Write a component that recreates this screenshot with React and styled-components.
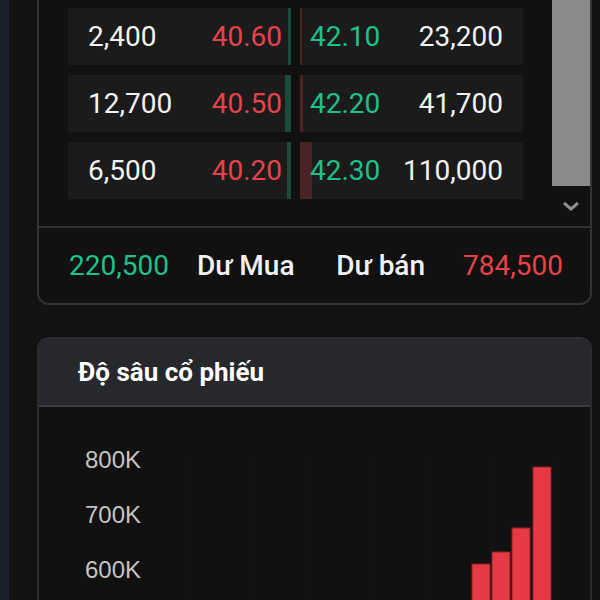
import styled, { createGlobalStyle } from "styled-components";

const GlobalStyle = createGlobalStyle`
  html, body {
    margin: 0;
    padding: 0;
    background: #121212;
    font-family: Roboto, "Noto Sans", "Liberation Sans", sans-serif;
    overflow: hidden;
  }
`;

const buyColor = "#20c08a";
const sellColor = "#e8434a";

const Shell = styled.div`
  display: flex;
  width: 600px;
  height: 600px;
  overflow: hidden;
`;

const SideRail = styled.div`
  width: 9px;
  flex-shrink: 0;
  background: #1b1e2b;
`;

const Main = styled.div`
  flex: 1;
  padding: 0 8px 0 28px;
  display: flex;
  flex-direction: column;
  gap: 32px;
`;

const OrderPanel = styled.div`
  border: 2px solid #333335;
  border-top: none;
  border-radius: 0 0 12px 12px;
  background: #111111;
`;

const Book = styled.div`
  display: flex;
  height: 226px;
`;

const RowList = styled.div`
  flex: 1;
  padding: 8px 29px 0;
  display: flex;
  flex-direction: column;
  gap: 10px;
`;

const Row = styled.div`
  display: grid;
  grid-template-columns: 1fr 1fr;
  gap: 9px;
  height: 57px;
`;

const Cell = styled.div`
  position: relative;
  background: #1b1b1b;
  display: flex;
  align-items: center;
  justify-content: space-between;
  padding: ${(p) => (p.side === "buy" ? "0 9px 0 20px" : "0 20px 0 10px")};
  font-size: 28px;
  color: #f2f2f2;
`;

const DepthBar = styled.span`
  position: absolute;
  top: 0;
  bottom: 0;
  ${(p) => (p.side === "buy" ? "right: 0;" : "left: 0;")}
  background: ${(p) => (p.side === "buy" ? "#1d4b39" : "#4b2327")};
`;

const Value = styled.span`
  position: relative;
  color: ${(p) => p.color || "#f2f2f2"};
`;

const Scrollbar = styled.div`
  width: 38px;
  display: flex;
  flex-direction: column;
`;

const Thumb = styled.div`
  height: 186px;
  background: #8b8b8b;
`;

const ArrowBtn = styled.div`
  flex: 1;
  display: flex;
  align-items: center;
  justify-content: center;
  color: #8e8e8e;
`;

const Totals = styled.div`
  border-top: 2px solid #333335;
  height: 75px;
  display: flex;
  align-items: center;
  justify-content: space-between;
  padding: 0 27px 0 30px;
  font-size: 28px;
`;

const TotalGroup = styled.div`
  display: flex;
  align-items: center;
  gap: ${(p) => p.gap}px;
`;

const TotalText = styled.span`
  color: ${(p) => p.color || "#f2f2f2"};
  font-weight: ${(p) => (p.label ? 500 : 400)};
`;

const DepthPanel = styled.div`
  flex: 1;
  border: 2px solid #2a2c31;
  border-bottom: none;
  border-radius: 12px 12px 0 0;
  overflow: hidden;
  display: flex;
  flex-direction: column;
  background: #111111;
`;

const PanelHeader = styled.div`
  height: 66px;
  flex-shrink: 0;
  background: #26282c;
  border-bottom: 2px solid #3a3c42;
  display: flex;
  align-items: center;
  padding-left: 39px;
  font-size: 26px;
  font-weight: 700;
  color: #ffffff;
`;

const ChartBody = styled.div`
  flex: 1;
`;

const rows = [
  { bq: "2,400", bp: "40.60", bw: 3, sp: "42.10", sq: "23,200", sw: 2 },
  { bq: "12,700", bp: "40.50", bw: 6, sp: "42.20", sq: "41,700", sw: 3 },
  { bq: "6,500", bp: "40.20", bw: 4, sp: "42.30", sq: "110,000", sw: 12 },
];

const bars = [
  { x: 433, top: 157 },
  { x: 453, top: 145 },
  { x: 473, top: 121 },
  { x: 494, top: 60 },
];

const gridX = [148, 210, 268, 330, 392, 454, 516];

const DepthChart = () => (
  <svg width="551" height="200" viewBox="0 0 551 200">
    {gridX.map((x) => (
      <line key={x} x1={x} y1="56" x2={x} y2="200" stroke="#151515" strokeWidth="1.5" />
    ))}
    {["800K", "700K", "600K"].map((t, i) => (
      <text
        key={t}
        x="46"
        y={61 + i * 55}
        fill="#c4c4c4"
        fontSize="24"
        fontFamily="Liberation Sans, Arial, sans-serif"
      >
        {t}
      </text>
    ))}
    {bars.map((b) => (
      <rect
        key={b.x}
        x={b.x}
        y={b.top}
        width="18"
        height={200 - b.top}
        fill="#e53a44"
        stroke="#8a2229"
        strokeWidth="1"
      />
    ))}
  </svg>
);

export default function App() {
  return (
    <Shell>
      <GlobalStyle />
      <SideRail />
      <Main>
        <OrderPanel>
          <Book>
            <RowList>
              {rows.map((r) => (
                <Row key={r.bq}>
                  <Cell side="buy">
                    <DepthBar side="buy" style={{ width: r.bw }} />
                    <Value>{r.bq}</Value>
                    <Value color={sellColor}>{r.bp}</Value>
                  </Cell>
                  <Cell side="sell">
                    <DepthBar side="sell" style={{ width: r.sw }} />
                    <Value color={buyColor}>{r.sp}</Value>
                    <Value>{r.sq}</Value>
                  </Cell>
                </Row>
              ))}
            </RowList>
            <Scrollbar>
              <Thumb />
              <ArrowBtn>
                <svg width="18" height="12" viewBox="0 0 18 12">
                  <path d="M2 3 L9 9 L16 3" fill="none" stroke="currentColor" strokeWidth="3" />
                </svg>
              </ArrowBtn>
            </Scrollbar>
          </Book>
          <Totals>
            <TotalGroup gap={28}>
              <TotalText color={buyColor}>220,500</TotalText>
              <TotalText label>Dư Mua</TotalText>
            </TotalGroup>
            <TotalGroup gap={38}>
              <TotalText label>Dư bán</TotalText>
              <TotalText color={sellColor}>784,500</TotalText>
            </TotalGroup>
          </Totals>
        </OrderPanel>
        <DepthPanel>
          <PanelHeader>Độ sâu cổ phiếu</PanelHeader>
          <ChartBody>
            <DepthChart />
          </ChartBody>
        </DepthPanel>
      </Main>
    </Shell>
  );
}
